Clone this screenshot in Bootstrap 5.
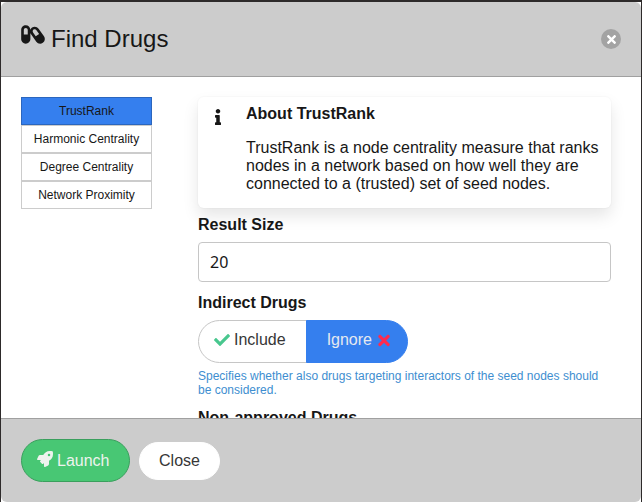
<!DOCTYPE html>
<html lang="en">
<head>
<meta charset="utf-8">
<meta name="viewport" content="width=device-width, initial-scale=1">
<title>Find Drugs</title>
<link href="https://cdn.jsdelivr.net/npm/bootstrap@5.3.0/dist/css/bootstrap.min.css" rel="stylesheet">
<style>
body { background: #2d2a2a; color: #171717; font-family: "Liberation Sans", Arial, sans-serif; font-size: 16px; line-height: 18px; padding: 2px 1px 0; }
.dialog-shell { background: #fff; }
.dialog-bar { background: #ccc; padding: 20px; }
.dialog-head { border-bottom: 1px solid #a0a0a0; border-radius: 6px 6px 0 0; min-height: 75px; }
.dialog-foot { border-top: 1px solid #a0a0a0; border-radius: 0 0 6px 6px; gap: 9px; }
.dialog-title { font-size: 24px; line-height: 32px; font-weight: 400; gap: 6px; }
.dialog-title svg { width: 24px; height: 21px; margin-top: 1px; }
.dismiss { width: 20px; height: 20px; background: #a3a3a3; color: #fff; }
.dismiss svg { width: 9px; height: 13px; }
.dialog-content { min-height: 0; overflow-y: auto; scrollbar-width: none; padding: 20px 30px 0 20px; gap: 46px; }
.method-list { flex: 0 0 131px; }
.method { --bs-btn-padding-y: 5px; --bs-btn-padding-x: 4px; --bs-btn-font-size: 12px; --bs-btn-line-height: 16px; --bs-btn-color: #171717; --bs-btn-bg: #fff; --bs-btn-border-color: #ccc; --bs-btn-border-radius: 0; --bs-btn-active-color: #171717; --bs-btn-active-bg: #357fee; --bs-btn-active-border-color: #2b66be; }
.info-box { border-radius: 6px; padding: 8px 12px 15px 16px; gap: 24px; box-shadow: 0 8px 16px rgba(0,0,0,.1), 0 0 1px 1px rgba(0,0,0,.02); }
.info-box svg { width: 8px; height: 16px; margin-top: 4px; }
.info-box h2, .field-name { font-size: 16px; line-height: 18px; font-weight: 700; }
.size-input { height: 40px; padding: 0 11px; border: 1px solid #c6c6c6; border-radius: 4px; color: #171717; font-family: "Noto Sans", sans-serif; font-size: 16px; margin-bottom: 12px; }
.pill { --bs-btn-padding-x: 15px; --bs-btn-line-height: 24px; --bs-btn-border-radius: 22px; height: 43px; }
.pill svg { width: 16px; height: 16px; }
.btn-group .pill { padding-top: 0; padding-bottom: 3px; }
.pill-include { --bs-btn-color: #363636; --bs-btn-border-color: #c6c6c6; --bs-btn-bg: #fff; width: 109px; }
.pill-ignore { --bs-btn-padding-x: 17px; --bs-btn-color: #e5e9f0; --bs-btn-bg: #357fee; --bs-btn-border-color: #357fee; width: 102px; gap: 6px; }
.pill-launch { --bs-btn-color: #eef3ee; --bs-btn-bg: #48c774; --bs-btn-border-color: #3a9f5d; width: 109px; }
.pill-launch svg { margin-bottom: 3px; }
.pill-close { --bs-btn-color: #363636; --bs-btn-bg: #fff; --bs-btn-border-color: #fff; height: 38px; width: 81px; }
.pill .tick { color: #48c78e; }
.pill .cross { color: #ff2b4e; width: 12px; height: 17px; }
.hint { color: #3e8ed0; font-size: 12px; line-height: 14px; margin: 6px 0 12px; }
</style>
</head>
<body class="vh-100 overflow-hidden">
<main class="dialog-shell d-flex flex-column h-100" role="dialog" aria-labelledby="dialog-title">
  <header class="dialog-bar dialog-head d-flex align-items-center justify-content-between flex-shrink-0">
    <h1 class="dialog-title d-flex align-items-start mb-0" id="dialog-title">
      <svg viewBox="0 0 576 512" fill="currentColor" aria-hidden="true"><path d="M555.3 300.1L424.2 112.8C401.9 81 366.4 64 330.4 64c-22.6 0-45.5 6.7-65.5 20.7-19.7 13.8-33.7 32.8-41.5 53.8C220.5 79.2 172 32 112 32 50.1 32 0 82.1 0 144v224c0 61.9 50.1 112 112 112s112-50.1 112-112V218.9c3.3 8.6 7.3 17.1 12.8 25L368 431.2C390.2 463 425.7 480 461.7 480c22.6 0 45.5-6.7 65.5-20.7 51.7-36.2 64.2-107.5 28.1-159.2zM160 256H64V144c0-26.5 21.5-48 48-48s48 21.5 48 48v112zm194.8 44.9l-65.6-93.7c-7.7-11-10.7-24.4-8.3-37.6 2.3-13.2 9.7-24.8 20.7-32.5 8.5-6 18.5-9.1 28.8-9.1 16.5 0 31.9 8 41.3 21.5l65.6 93.7-82.5 57.7z"/></svg>
      <span>Find Drugs</span>
    </h1>
    <button type="button" class="dismiss btn rounded-circle border-0 p-0 d-flex align-items-center justify-content-center" aria-label="Dismiss">
      <svg viewBox="0 0 352 512" fill="currentColor" aria-hidden="true"><path d="M242.72 256l100.07-100.07c12.28-12.28 12.28-32.19 0-44.48l-22.24-22.24c-12.28-12.28-32.19-12.28-44.48 0L176 189.28 75.93 89.21c-12.28-12.28-32.19-12.28-44.48 0L9.21 111.45c-12.28 12.28-12.28 32.19 0 44.48L109.28 256 9.21 356.07c-12.28 12.28-12.28 32.19 0 44.48l22.24 22.24c12.28 12.28 32.2 12.28 44.48 0L176 322.72l100.07 100.07c12.28 12.28 32.2 12.28 44.48 0l22.24-22.24c12.28-12.28 12.28-32.19 0-44.48L242.72 256z"/></svg>
    </button>
  </header>

  <section class="dialog-content d-flex flex-grow-1 align-items-start">
    <nav class="method-list d-flex flex-column" aria-label="Algorithm">
      <button type="button" class="method btn active" aria-pressed="true">TrustRank</button>
      <button type="button" class="method btn">Harmonic Centrality</button>
      <button type="button" class="method btn">Degree Centrality</button>
      <button type="button" class="method btn">Network Proximity</button>
    </nav>

    <form class="flex-grow-1">
      <div class="info-box d-flex mb-2">
        <svg class="flex-shrink-0" viewBox="0 0 192 512" fill="currentColor" aria-hidden="true"><path d="M20 424.229h20V279.771H20c-11.046 0-20-8.954-20-20V212c0-11.046 8.954-20 20-20h112c11.046 0 20 8.954 20 20v212.229h20c11.046 0 20 8.954 20 20V492c0 11.046-8.954 20-20 20H20c-11.046 0-20-8.954-20-20v-47.771c0-11.046 8.954-20 20-20zM96 0C56.235 0 24 32.235 24 72s32.235 72 72 72 72-32.235 72-72S135.764 0 96 0z"/></svg>
        <div>
          <h2 class="mb-3">About TrustRank</h2>
          <p class="mb-0">TrustRank is a node centrality measure that ranks nodes in a network based on how well they are connected to a (trusted) set of seed nodes.</p>
        </div>
      </div>

      <label class="field-name d-block mb-2" for="result-size">Result Size</label>
      <input class="size-input form-control" id="result-size" type="text" inputmode="numeric" value="20">

      <h3 class="field-name mb-2" id="indirect-name">Indirect Drugs</h3>
      <div class="btn-group" role="group" aria-labelledby="indirect-name">
        <button type="button" class="pill pill-include btn d-flex align-items-center gap-1">
          <svg class="tick" viewBox="0 0 512 512" fill="currentColor" aria-hidden="true"><path d="M173.898 439.404l-166.4-166.4c-9.997-9.997-9.997-26.206 0-36.204l36.203-36.204c9.997-9.998 26.207-9.998 36.204 0L192 312.69 432.095 72.596c9.997-9.997 26.207-9.997 36.204 0l36.203 36.204c9.997 9.997 9.997 26.206 0 36.204l-294.4 294.401c-9.998 9.997-26.207 9.997-36.204-.001z"/></svg>
          <span>Include</span>
        </button>
        <button type="button" class="pill pill-ignore btn d-flex align-items-center justify-content-end" aria-pressed="true">
          <span>Ignore</span>
          <svg class="cross" viewBox="0 0 352 512" fill="currentColor" aria-hidden="true"><path d="M242.72 256l100.07-100.07c12.28-12.28 12.28-32.19 0-44.48l-22.24-22.24c-12.28-12.28-32.19-12.28-44.48 0L176 189.28 75.93 89.21c-12.28-12.28-32.19-12.28-44.48 0L9.21 111.45c-12.28 12.28-12.28 32.19 0 44.48L109.28 256 9.21 356.07c-12.28 12.28-12.28 32.19 0 44.48l22.24 22.24c12.28 12.28 32.2 12.28 44.48 0L176 322.72l100.07 100.07c12.28 12.28 32.2 12.28 44.48 0l22.24-22.24c12.28-12.28 12.28-32.19 0-44.48L242.72 256z"/></svg>
        </button>
      </div>
      <p class="hint">Specifies whether also drugs targeting interactors of the seed nodes should be considered.</p>

      <h3 class="field-name mb-2">Non-approved Drugs</h3>
    </form>
  </section>

  <footer class="dialog-bar dialog-foot d-flex align-items-center flex-shrink-0">
    <button type="button" class="pill pill-launch btn d-flex align-items-center gap-1">
      <svg viewBox="0 0 512 512" fill="currentColor" aria-hidden="true"><path d="M505.12 19.094c-1.19-5.532-6.658-11-12.207-12.188C460.716 0 435.507 0 410.407 0 307.175 0 245.27 55.203 199.052 128H94.838c-16.348.016-35.557 11.875-42.887 26.484L2.516 253.297A28.4 28.4 0 0 0 0 264a24.009 24.009 0 0 0 24.006 24h103.81l-22.474 22.469c-11.366 11.361-12.996 32.258 0 45.25l50.904 50.906c11.156 11.188 32.156 13.156 45.277 0l22.475-22.469V488a24.009 24.009 0 0 0 24.006 24 28.56 28.56 0 0 0 10.707-2.516l98.728-49.39c14.629-7.297 26.508-26.5 26.508-42.86V312.797c72.598-46.313 128.035-108.406 128.035-211.094.093-25.203.093-50.406-6.862-82.609zM384.04 168A40 40 0 1 1 424.05 128a40.023 40.023 0 0 1-40.01 40z"/></svg>
      <span>Launch</span>
    </button>
    <button type="button" class="pill pill-close btn">Close</button>
  </footer>
</main>
<script src="https://cdn.jsdelivr.net/npm/bootstrap@5.3.0/dist/js/bootstrap.bundle.min.js"></script>
</body>
</html>
